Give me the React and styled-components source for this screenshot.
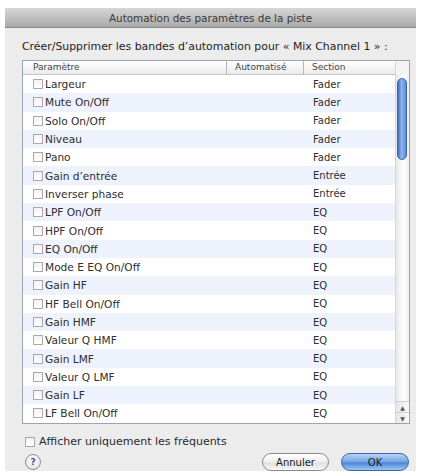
import React from "react";
import styled, { createGlobalStyle } from "styled-components";

const GlobalStyle = createGlobalStyle`
  html, body {
    margin: 0;
    padding: 0;
    background: #ffffff;
  }
  body {
    font-family: "DejaVu Sans", "Liberation Sans", sans-serif;
    color: #2a2a2a;
  }
`;

const rows = [
  ["Largeur", "Fader"],
  ["Mute On/Off", "Fader"],
  ["Solo On/Off", "Fader"],
  ["Niveau", "Fader"],
  ["Pano", "Fader"],
  ["Gain d’entrée", "Entrée"],
  ["Inverser phase", "Entrée"],
  ["LPF On/Off", "EQ"],
  ["HPF On/Off", "EQ"],
  ["EQ On/Off", "EQ"],
  ["Mode E EQ On/Off", "EQ"],
  ["Gain HF", "EQ"],
  ["HF Bell On/Off", "EQ"],
  ["Gain HMF", "EQ"],
  ["Valeur Q HMF", "EQ"],
  ["Gain LMF", "EQ"],
  ["Valeur Q LMF", "EQ"],
  ["Gain LF", "EQ"],
  ["LF Bell On/Off", "EQ"],
];

const Page = styled.div`
  padding: 8px 10px 0 5px;
`;

const Dialog = styled.div`
  width: 411px;
  height: 463px;
  background: #ececec;
  display: flex;
  flex-direction: column;
`;

const TitleBar = styled.div`
  height: 19px;
  background: linear-gradient(#d6d6d6, #aaaaaa);
  border-bottom: 1px solid #8a8a8a;
  display: flex;
  align-items: center;
  justify-content: center;
  font-size: 10.4px;
  color: #3a3a3a;
`;

const Body = styled.div`
  flex: 1;
  display: flex;
  flex-direction: column;
  padding: 9px 6px 0 17px;
`;

const Prompt = styled.div`
  font-size: 10.9px;
  color: #1e1e1e;
  height: 20px;
  line-height: 20px;
  margin-bottom: 3px;
`;

const Table = styled.div`
  height: 364px;
  border: 1px solid #9aa4b4;
  box-shadow: inset 0 0 0 1px #c9d3e3;
  background: #ffffff;
  display: flex;
  box-sizing: border-box;
  overflow: hidden;
`;

const TableMain = styled.div`
  flex: 1;
  display: flex;
  flex-direction: column;
  min-width: 0;
`;

const Header = styled.div`
  height: 13px;
  flex: none;
  display: grid;
  grid-template-columns: 204px 77px 1fr;
  background: linear-gradient(#ffffff, #ebebeb);
  border-bottom: 1px solid #c4c4c4;
  font-size: 9px;
  color: #444;
`;

const HeadCell = styled.div`
  padding-left: ${(p) => p.$pad}px;
  line-height: 13px;
  border-right: ${(p) => (p.$sep ? "1px solid #b8b8b8" : "none")};
`;

const Row = styled.div`
  height: 18.3px;
  flex: none;
  display: grid;
  grid-template-columns: 281px 1fr;
  align-items: center;
  background: ${(p) => (p.$odd ? "#edf2fc" : "#ffffff")};
  font-size: 10.6px;
  color: #2e2e2e;
`;

const NameCell = styled.div`
  display: flex;
  align-items: center;
  padding-left: 10px;
  gap: 2px;
`;

const Box = styled.span`
  width: 10px;
  height: 10px;
  box-sizing: border-box;
  border: 1px solid #a9a9a9;
  background: linear-gradient(#f2f2f2, #ffffff);
  display: inline-block;
  flex: none;
`;

const SectionCell = styled.div`
  padding-left: 9px;
  font-size: 10px;
`;

const Scrollbar = styled.div`
  width: 13px;
  display: flex;
  flex-direction: column;
  border-left: 1px solid #d6d6d6;
  background: linear-gradient(90deg, #e9e9e9, #ffffff 60%, #eeeeee);
`;

const ScrollCap = styled.div`
  height: 13px;
  background: #f4f4f4;
`;

const Track = styled.div`
  flex: 1;
  padding: 4px 2px 0 1px;
`;

const Thumb = styled.div`
  height: 80px;
  border-radius: 6px;
  border: 1px solid #3a68ad;
  background: linear-gradient(90deg, #3f6fc0, #8fb5ef 45%, #5d8ad8);
`;

const Arrow = styled.div`
  height: 10px;
  display: flex;
  align-items: center;
  justify-content: center;
  font-size: 6px;
  color: #555;
  background: linear-gradient(90deg, #e6e6e6, #fafafa);
  border-top: 1px solid #d0d0d0;
`;

const Option = styled.label`
  display: flex;
  align-items: center;
  gap: 4px;
  font-size: 11px;
  color: #2a2a2a;
  margin: 11px 0 0 3px;
`;

const Footer = styled.div`
  display: flex;
  align-items: center;
  margin-top: 5px;
  padding-left: 3px;
  padding-right: 1px;
`;

const Help = styled.div`
  width: 14px;
  height: 14px;
  border-radius: 50%;
  border: 1px solid #8d8d9e;
  background: radial-gradient(circle at 50% 35%, #ffffff, #dcdce6);
  color: #52489a;
  font-size: 9px;
  font-weight: bold;
  display: flex;
  align-items: center;
  justify-content: center;
`;

const Spacer = styled.div`
  flex: 1;
`;

const Button = styled.div`
  width: ${(p) => p.$w}px;
  height: 18px;
  border-radius: 10px;
  box-sizing: border-box;
  display: flex;
  align-items: center;
  justify-content: center;
  font-size: 10px;
  margin-left: ${(p) => p.$ml || 0}px;
  border: 1px solid ${(p) => (p.$primary ? "#3c66a6" : "#8c8c8c")};
  color: #222;
  background: ${(p) =>
    p.$primary
      ? "linear-gradient(#b9d4f5, #6fa2e4 50%, #4e86d6 55%, #9bc5f5)"
      : "linear-gradient(#ffffff, #eeeeee 50%, #e0e0e0 55%, #f6f6f6)"};
`;

export default function App() {
  return (
    <Page>
      <GlobalStyle />
      <Dialog>
        <TitleBar>Automation des paramètres de la piste</TitleBar>
        <Body>
          <Prompt>Créer/Supprimer les bandes d’automation pour « Mix Channel 1 » :</Prompt>
          <Table>
            <TableMain>
              <Header>
                <HeadCell $pad={10} $sep>Paramètre</HeadCell>
                <HeadCell $pad={8} $sep>Automatisé</HeadCell>
                <HeadCell $pad={8}>Section</HeadCell>
              </Header>
              {rows.map(([name, section], i) => (
                <Row key={name} $odd={i % 2 === 1}>
                  <NameCell>
                    <Box />
                    {name}
                  </NameCell>
                  <SectionCell>{section}</SectionCell>
                </Row>
              ))}
            </TableMain>
            <Scrollbar>
              <ScrollCap />
              <Track>
                <Thumb />
              </Track>
              <Arrow>▲</Arrow>
              <Arrow>▼</Arrow>
            </Scrollbar>
          </Table>
          <Option>
            <Box />
            Afficher uniquement les fréquents
          </Option>
          <Footer>
            <Help>?</Help>
            <Spacer />
            <Button $w={67}>Annuler</Button>
            <Button $w={68} $ml={12} $primary>
              OK
            </Button>
          </Footer>
        </Body>
      </Dialog>
    </Page>
  );
}
